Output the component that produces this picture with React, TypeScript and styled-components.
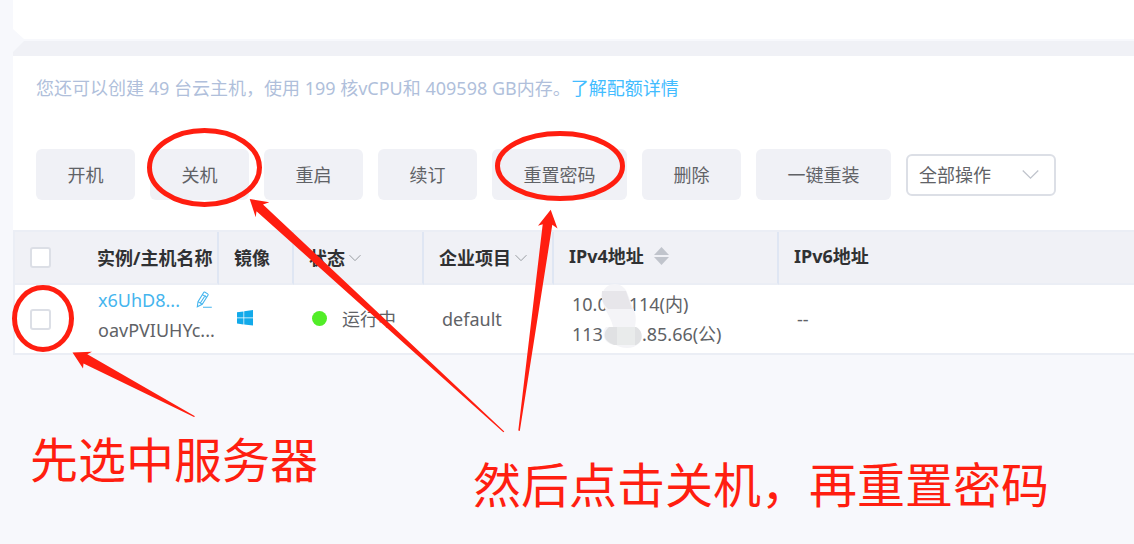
import React from "react";
import styled, { createGlobalStyle } from "styled-components";

const GlobalStyle = createGlobalStyle`
  *, *::before, *::after { box-sizing: border-box; }
  body {
    margin: 0;
    background: #f7f8fc;
    color: #606266;
    font-family: "Noto Sans", "Noto Sans CJK SC", sans-serif;
    font-size: 18px;
    font-weight: 400;
    line-height: 30px;
  }
`;

const Page = styled.div`
  position: relative;
  min-height: 100vh;
  padding-left: 13px;
  overflow: hidden;
`;

const TopCard = styled.div`
  height: 39px;
  background: #fff;
  clip-path: polygon(0 0, 100% 0, 100% 100%, 11px 100%, 0 29px);
`;

const Band = styled.div`
  height: 15px;
  margin-top: 2px;
  background: #f0f1f6;
  clip-path: polygon(11px 0, 100% 0, 100% 100%, 0 100%, 0 11px);
`;

const Panel = styled.main`
  background: #fff;
`;

const Quota = styled.p`
  margin: 0;
  padding: 17px 23px 46px;
  color: #b0bfdb;
`;

const QuotaLink = styled.a`
  color: #42bcff;
  text-decoration: none;
`;

const Toolbar = styled.div`
  display: flex;
  align-items: center;
  gap: 15px;
  padding: 0 23px 30px;
`;

const Action = styled.button<{ $wide?: boolean }>`
  flex: none;
  width: ${(p) => (p.$wide ? 135 : 99)}px;
  height: 51px;
  padding: 0;
  border: 0;
  border-radius: 6px;
  background: #f0f1f6;
  color: inherit;
  font: inherit;
`;

const SelectBox = styled.label`
  display: grid;
  flex: none;
  align-items: center;
  width: 150px;
  height: 42px;
  & > * { grid-area: 1 / 1; }
  & > svg {
    justify-self: end;
    margin-right: 17px;
    pointer-events: none;
  }
`;

const Select = styled.select`
  width: 100%;
  height: 100%;
  padding: 0 11px;
  border: 2px solid #dcdfe6;
  border-radius: 6px;
  background: #fff;
  color: inherit;
  font: inherit;
  appearance: none;
`;

const Table = styled.table`
  width: 100%;
  table-layout: fixed;
  border: 2px solid #ebeef5;
  border-right: 0;
  border-bottom: 0;
  border-spacing: 0;
  text-align: left;
`;

const Col = styled.col<{ $w?: number }>`
  width: ${(p) => (p.$w ? `${p.$w}px` : "auto")};
`;

const Th = styled.th<{ $line?: boolean; $raised?: boolean }>`
  height: 53px;
  padding: 0 0 ${(p) => (p.$raised ? 3 : 0)}px 15px;
  border-bottom: 2px solid #ebeef5;
  border-right: ${(p) => (p.$line ? "2px solid #dfe6f3" : "0")};
  background: #f0f1f6;
  color: #303133;
  font-weight: 700;
  white-space: nowrap;
`;

const Td = styled.td<{ $first?: boolean }>`
  position: relative;
  height: 70px;
  padding: 0 0 0 ${(p) => (p.$first ? 15 : 18)}px;
  border-bottom: 2px solid #ebeef5;
  white-space: nowrap;
`;

const NameTd = styled(Td)`
  padding: 0 0 8px 16px;
`;

const Check = styled.input`
  display: block;
  width: 21px;
  height: 21px;
  margin: 0;
  border: 2px solid #dcdfe6;
  border-radius: 3px;
  background: #fff;
  appearance: none;
`;

const Inline = styled.span<{ $gap: number }>`
  display: inline-flex;
  align-items: center;
  gap: ${(p) => p.$gap}px;
`;

const Line = styled.div`
  display: flex;
  align-items: center;
  height: 30px;
`;

const HostLink = styled.a`
  width: 98px;
  color: #45b5ee;
  text-decoration: none;
`;

const Dot = styled.span`
  width: 15px;
  height: 15px;
  border-radius: 50%;
  background: #52ed28;
`;

const Hidden = styled.span<{ $w: number }>`
  width: ${(p) => p.$w}px;
`;

const Smudge = styled.svg`
  position: absolute;
  top: -1px;
  left: 46px;
`;

const Marks = styled.svg`
  position: absolute;
  top: 0;
  left: 0;
  pointer-events: none;
`;

const Note = styled.p<{ $x: number; $y: number }>`
  position: absolute;
  top: ${(p) => p.$y}px;
  left: ${(p) => p.$x}px;
  margin: 0;
  color: #ff1e10;
  font-size: 48px;
  font-weight: 400;
  line-height: 60px;
  white-space: nowrap;
`;

const Chevron = ({ size, color }: { size: number; color: string }) => (
  <svg width={size} height={size} viewBox="0 0 16 16" fill="none" stroke={color} strokeWidth="1.2" aria-hidden="true">
    <path d="M.7 4.2 8 11.5l7.3-7.3" />
  </svg>
);

const SortIcon = () => (
  <svg width="15" height="18" viewBox="0 0 15 18" fill="#c0c4cc" aria-hidden="true">
    <path d="M7.5 0 15 8H0zM0 10h15l-7.5 8z" />
  </svg>
);

const PencilIcon = () => (
  <svg width="17" height="18" viewBox="0 0 17 18" fill="none" stroke="#45b5ee" strokeWidth="1.1" aria-hidden="true">
    <path d="M1.3 15.8 2 10.6 7.7 1.5q.5-.8 1.3-.3l2.7 1.7q.8.5.3 1.3L6.2 13.3zM2 10.6l4.2 2.7M6.4 3.6l4.2 2.7M4.5 11.8l4.9-7.6M7 16.2h8.8" />
  </svg>
);

const WindowsIcon = () => (
  <svg width="16" height="16" viewBox="0 0 16 16" fill="#12aaea" role="img" aria-label="Windows">
    <path d="M0 2.3 6.5 1.4v6.2H0zM7.2 1.3 16 0v7.6H7.2zM0 8.3h6.5v6.2L0 13.6zM7.2 8.3H16v7.2l-8.8-1z" />
  </svg>
);

export default function App() {
  return (
    <Page>
      <GlobalStyle />
      <TopCard />
      <Band />
      <Panel>
        <Quota>
          您还可以创建 49 台云主机，使用 199 核vCPU和 409598 GB内存。<QuotaLink href="#quota">了解配额详情</QuotaLink>
        </Quota>
        <Toolbar>
          <Action type="button">开机</Action>
          <Action type="button">关机</Action>
          <Action type="button">重启</Action>
          <Action type="button">续订</Action>
          <Action type="button" $wide>重置密码</Action>
          <Action type="button">删除</Action>
          <Action type="button" $wide>一键重装</Action>
          <SelectBox>
            <Select aria-label="全部操作">
              <option>全部操作</option>
            </Select>
            <Chevron size={17} color="#c0c4cc" />
          </SelectBox>
        </Toolbar>
        <Table>
          <colgroup>
            <Col $w={67} />
            <Col $w={137} />
            <Col $w={75} />
            <Col $w={130} />
            <Col $w={130} />
            <Col $w={225} />
            <Col />
          </colgroup>
          <thead>
            <tr>
              <Th><Check type="checkbox" aria-label="全选" /></Th>
              <Th $line>实例/主机名称</Th>
              <Th $line>镜像</Th>
              <Th $line><Inline $gap={4}>状态<Chevron size={12} color="#909399" /></Inline></Th>
              <Th $line><Inline $gap={4}>企业项目<Chevron size={12} color="#909399" /></Inline></Th>
              <Th $line $raised><Inline $gap={10}>IPv4地址<SortIcon /></Inline></Th>
              <Th $raised>IPv6地址</Th>
            </tr>
          </thead>
          <tbody>
            <tr>
              <Td $first><Check type="checkbox" aria-label="选择主机" /></Td>
              <NameTd>
                <Line><HostLink href="#host">x6UhD8...</HostLink><PencilIcon /></Line>
                <Line>oavPVIUHYc...</Line>
              </NameTd>
              <Td><Inline $gap={0}><WindowsIcon /></Inline></Td>
              <Td><Inline $gap={15}><Dot />运行中</Inline></Td>
              <Td>default</Td>
              <Td>
                <Line>10.0<Hidden $w={21} />114(内)</Line>
                <Line>113<Hidden $w={39} />.85.66(公)</Line>
                <Smudge width="46" height="66" viewBox="0 0 46 66" aria-hidden="true">
                  <path d="M2 13C2 4 9 0 15 0s11 4 13 11l7 18c1 4 1 8 0 14 8 3 9 13 3 17-4 5-16 5-22 1C5 61 0 50 6 43h7C11 32 2 24 2 13z" fill="#f4f4f7" />
                  <path d="M2 7h24l6 18H8Q0 18 2 7z" fill="#e7e6ea" />
                  <path d="M9 43h27c8 4 7 15 0 18H14C3 57 2 49 9 43z" fill="#e0e1e3" />
                  <path d="M17 43h18v18H17z" fill="#e9ebeb" />
                </Smudge>
              </Td>
              <Td>--</Td>
            </tr>
          </tbody>
        </Table>
      </Panel>
      <Marks width="1134" height="544" viewBox="0 0 1134 544" fill="#ff1e10" aria-hidden="true">
        <g fill="none" stroke="#ff1e10" strokeWidth="5">
          <ellipse cx="204.5" cy="167.5" rx="55" ry="37" />
          <ellipse cx="560" cy="166" rx="62.5" ry="32.5" />
          <ellipse cx="43" cy="318.5" rx="28.5" ry="31" />
        </g>
        <path d="M72.5 352.5 92 351.7 87.3 354.3 195 416.2 194 417 83.5 363.5 83 368.5z" />
        <path d="M249.7 199 269.3 202.2 263 204.4 504.3 431.5 503.4 432.2 256.5 211.2 255.7 217.2z" />
        <path d="M550.7 209.7 557.5 228.5 552.3 224.8 519.8 431 518.3 430.5 542.7 224.3 538 225.7z" />
      </Marks>
      <Note $x={30} $y={430}>先选中服务器</Note>
      <Note $x={473} $y={455}>然后点击关机，再重置密码</Note>
    </Page>
  );
}
